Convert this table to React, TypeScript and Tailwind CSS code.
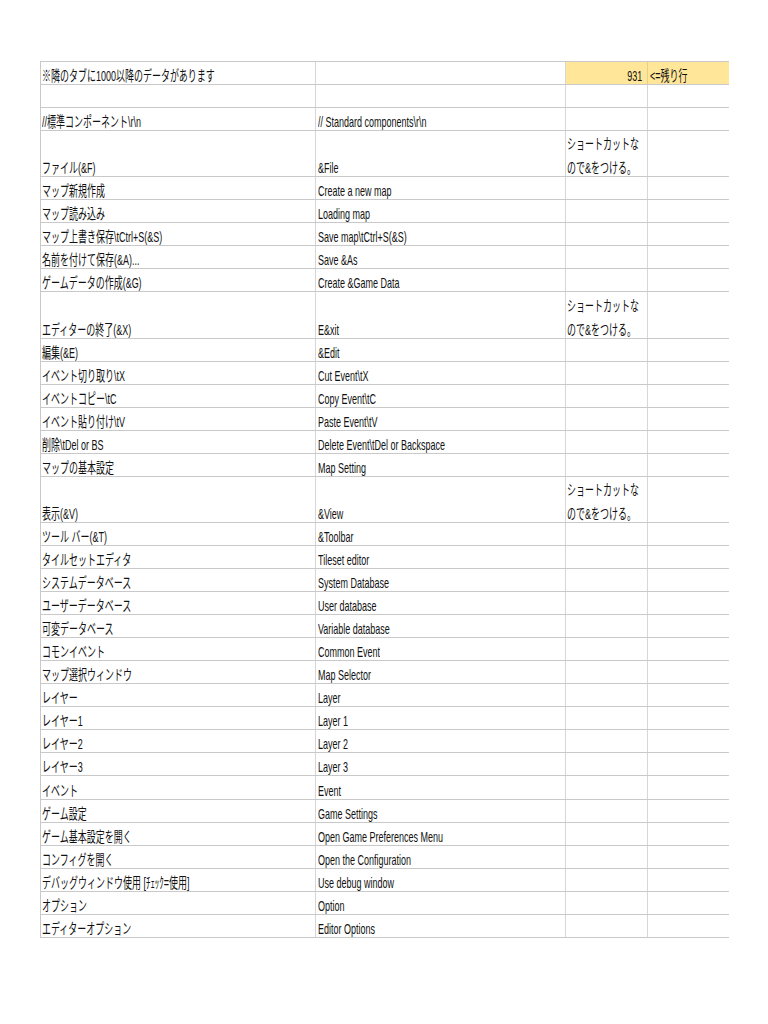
import React from 'react';

type Row = {
  ja: string;
  en: string;
  note?: boolean;
  tall?: boolean;
};

const rows: Row[] = [
  { ja: '', en: '' },
  { ja: '//標準コンポーネント\\r\\n', en: '// Standard components\\r\\n' },
  { ja: 'ファイル(&F)', en: '&File', note: true, tall: true },
  { ja: 'マップ新規作成', en: 'Create a new map' },
  { ja: 'マップ読み込み', en: 'Loading map' },
  { ja: 'マップ上書き保存\\tCtrl+S(&S)', en: 'Save map\\tCtrl+S(&S)' },
  { ja: '名前を付けて保存(&A)...', en: 'Save &As' },
  { ja: 'ゲームデータの作成(&G)', en: 'Create &Game Data' },
  { ja: 'エディターの終了(&X)', en: 'E&xit', note: true, tall: true },
  { ja: '編集(&E)', en: '&Edit' },
  { ja: 'イベント切り取り\\tX', en: 'Cut Event\\tX' },
  { ja: 'イベントコピー\\tC', en: 'Copy Event\\tC' },
  { ja: 'イベント貼り付け\\tV', en: 'Paste Event\\tV' },
  { ja: '削除\\tDel or BS', en: 'Delete Event\\tDel or Backspace' },
  { ja: 'マップの基本設定', en: 'Map Setting' },
  { ja: '表示(&V)', en: '&View', note: true, tall: true },
  { ja: 'ツール バー(&T)', en: '&Toolbar' },
  { ja: 'タイルセットエディタ', en: 'Tileset editor' },
  { ja: 'システムデータベース', en: 'System Database' },
  { ja: 'ユーザーデータベース', en: 'User database' },
  { ja: '可変データベース', en: 'Variable database' },
  { ja: 'コモンイベント', en: 'Common Event' },
  { ja: 'マップ選択ウィンドウ', en: 'Map Selector' },
  { ja: 'レイヤー', en: 'Layer' },
  { ja: 'レイヤー1', en: 'Layer 1' },
  { ja: 'レイヤー2', en: 'Layer 2' },
  { ja: 'レイヤー3', en: 'Layer 3' },
  { ja: 'イベント', en: 'Event' },
  { ja: 'ゲーム設定', en: 'Game Settings' },
  { ja: 'ゲーム基本設定を開く', en: 'Open Game Preferences Menu' },
  { ja: 'コンフィグを開く', en: 'Open the Configuration' },
  { ja: 'デバッグウィンドウ使用 [ﾁｪｯｸ=使用]', en: 'Use debug window' },
  { ja: 'オプション', en: 'Option' },
  { ja: 'エディターオプション', en: 'Editor Options' }
];

// the sheet's font is a squeezed one, so every cell text is narrowed the same way
function Txt({ text, right }: { text: string; right?: boolean }) {
  return (
    <span
      className={`inline-block whitespace-nowrap scale-x-[0.62] ${right ? 'origin-right' : 'origin-left'}`}
    >
      {text}
    </span>
  );
}

export default function App() {
  return (
    <div
      className="min-h-screen w-[768px] bg-white pt-[61px] pl-[40px] text-[14.5px] leading-[16px] text-[#111]"
      style={{ fontFamily: '"Liberation Sans", "Noto Sans CJK JP", sans-serif' }}
    >
      <div className="w-[689px] border-t border-[#c9c9c9]">
        {/* header row with remaining count */}
        <div className="flex h-[23.05px] border-b border-[#c9c9c9]">
          <div className="w-[275px] border-l border-[#c9c9c9] pl-[1px] flex items-end overflow-hidden">
            <Txt text="※隣のタブに1000以降のデータがあります" />
          </div>
          <div className="w-[250px] border-l border-[#d6d6d6]" />
          <div className="w-[82px] border-l border-[#d6d6d6] bg-[#ffe699] pr-[5px] flex items-end justify-end">
            <Txt right text="931" />
          </div>
          <div className="w-[82px] border-l border-[#e6cf8a] bg-[#ffe699] pl-[2px] flex items-end">
            <Txt text="<=残り行" />
          </div>
        </div>

        {rows.map((r, i) => (
          <div
            key={i}
            className={`flex border-b border-[#c9c9c9] ${r.tall ? 'h-[46.1px]' : 'h-[23.05px]'}`}
          >
            <div className="w-[275px] border-l border-[#c9c9c9] pl-[1px] flex items-end overflow-hidden">
              <Txt text={r.ja} />
            </div>
            <div className="w-[250px] border-l border-[#d6d6d6] pl-[2px] flex items-end overflow-hidden">
              <Txt text={r.en} />
            </div>
            <div className="w-[82px] border-l border-[#d6d6d6] pl-[1px] flex flex-col justify-end gap-[8px] overflow-hidden">
              {r.note && (
                <>
                  <Txt text="ショートカットな" />
                  <Txt text="ので&をつける。" />
                </>
              )}
            </div>
            <div className="w-[82px] border-l border-[#d6d6d6]" />
          </div>
        ))}
      </div>
    </div>
  );
}
